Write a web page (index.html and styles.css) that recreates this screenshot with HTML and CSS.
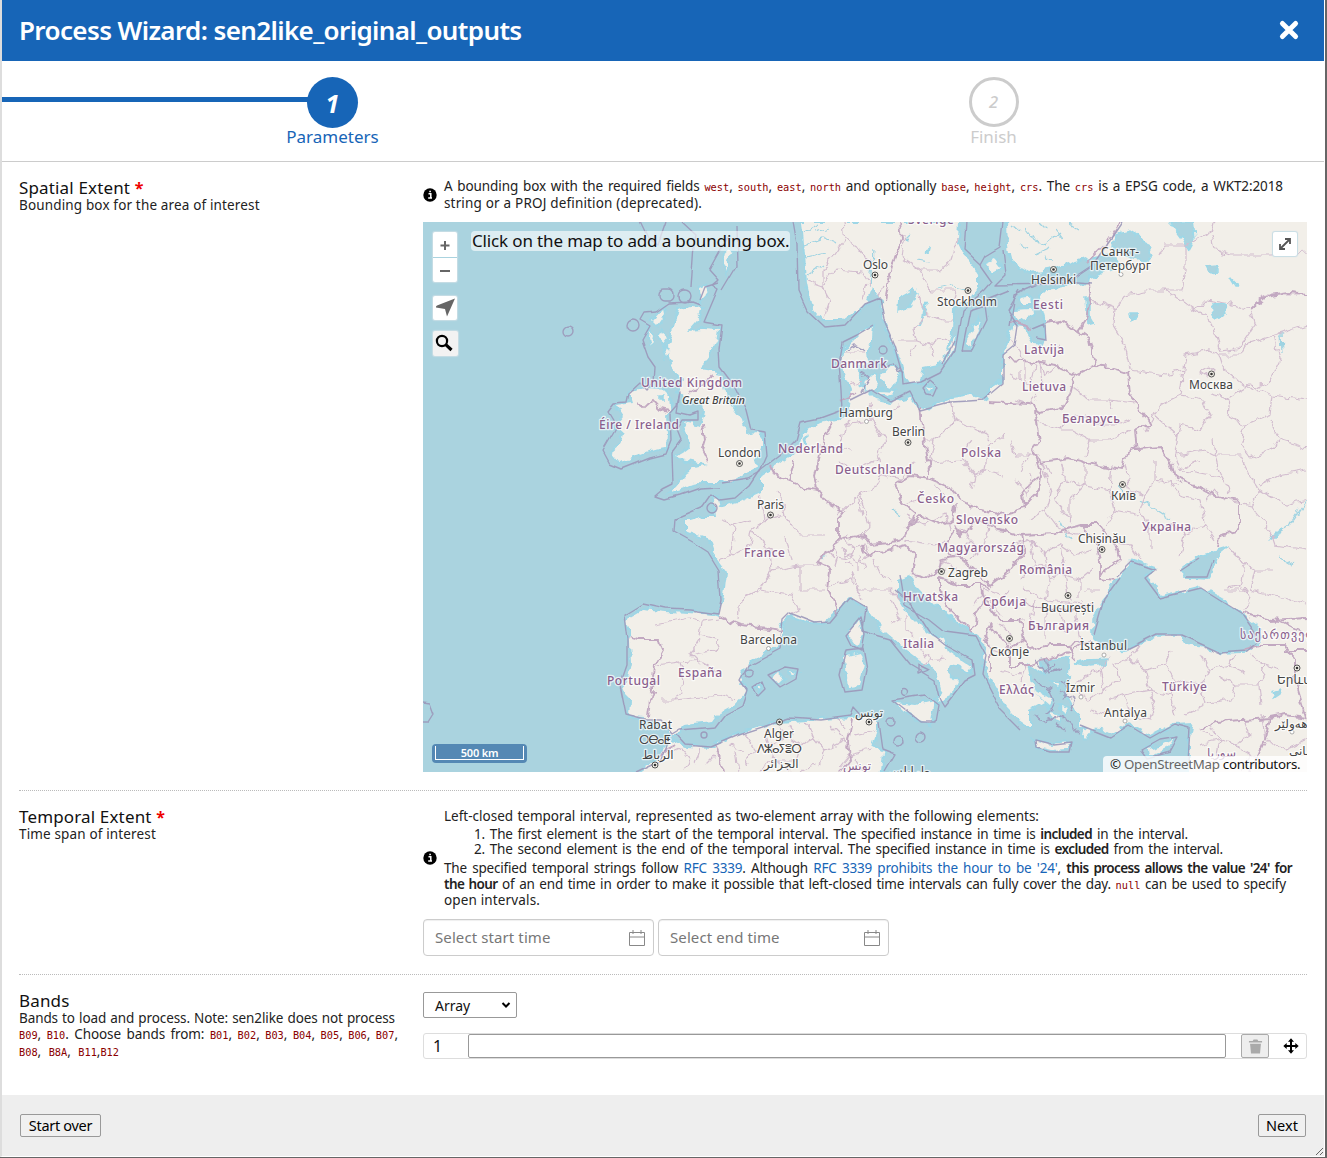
FILE: index.html
```html
<!DOCTYPE html>
<html lang="en">
<head>
<meta charset="utf-8">
<title>Process Wizard</title>
<link rel="stylesheet" href="styles.css">
</head>
<body>
<div class="dialog">
  <header class="bar">
    <h1>Process Wizard: sen2like_original_outputs</h1>
    <svg class="close" viewBox="0 0 20 20"><path d="M4 4L16 16M16 4L4 16"/></svg>
  </header>
  <nav class="steps">
    <div class="step active"><i>1</i><span>Parameters</span></div>
    <div class="step"><i>2</i><span>Finish</span></div>
  </nav>
  <main>
    <section class="row extent">
      <div class="label"><h2>Spatial Extent <b>*</b></h2><p class="l1">Bounding box for the area of interest</p></div>
      <div class="field">
        <div class="help">
          <svg class="info" viewBox="0 0 14 14"><circle cx="7" cy="7" r="6.7"/><path d="M5.5 5.7h2.3v4M5.2 10h3.8M6.3 3.4h1.6"/></svg>
          <div class="text">
            <p class="s1">A bounding box with the required fields <code>west</code>, <code>south</code>, <code>east</code>, <code>north</code> and optionally <code>base</code>, <code>height</code>, <code>crs</code>. The <code>crs</code> is a EPSG code, a WKT2:2018</p>
            <p class="s2">string or a PROJ definition (deprecated).</p>
          </div>
        </div>
        <div class="map">
          <svg class="canvas" viewBox="423 222 884 550">
            <defs>
              <filter id="rough" filterUnits="userSpaceOnUse" x="415" y="214" width="900" height="566" color-interpolation-filters="sRGB">
                <feTurbulence type="fractalNoise" baseFrequency="0.11" numOctaves="2" seed="4"/>
                <feDisplacementMap in="SourceGraphic" scale="9" xChannelSelector="R" yChannelSelector="G"/>
              </filter>
              <filter id="soft" filterUnits="userSpaceOnUse" x="415" y="214" width="900" height="566" color-interpolation-filters="sRGB">
                <feTurbulence type="fractalNoise" baseFrequency="0.04" numOctaves="1" seed="9"/>
                <feDisplacementMap in="SourceGraphic" scale="7" xChannelSelector="R" yChannelSelector="G"/>
              </filter>
              <g id="ground">
                <path d="M678 310L690 306L702 307L701 315L688 330L703 329L718 330L716 342L711 352L705 360L700 368L714 370L722 380L726 397L733 407L743 420L747 436L755 433L763 438L763 447L755 460L757 468L740 477L723 482L700 482L690 484L683 488L671 492L686 473L696 468L708 465L695 462L676 458L690 447L686 430L683 423L700 427L704 412L703 402L688 400L678 393L682 380L673 367L668 347L673 330Z"/>
                <path d="M616 405L633 403L630 393L646 387L661 388L670 397L671 407L666 415L667 432L666 447L650 450L636 455L620 463L611 452L620 444L623 433L616 427L624 417Z"/>
                <path d="M663 310L664 315L657 325L653 321ZM649 330l3 5-2 9-2-7ZM661 332l7 6-4 5-6-5ZM664 348l6 3-4 5ZM700 289l5-2 2 7-6 6ZM725 252l5 2-4 16-3-8Z"/>
                <path d="M802 222L805 253L807 283L812 307L823 320L843 320L867 302L873 286L882 300L883 317L893 343L902 363L905 380L920 382L923 367L943 363L952 330L953 307L967 303L978 287L978 277L965 257L957 240L958 222Z"/>
                <path d="M1007 222L1008 245L1010 260L1030 272L1053 268L1087 258L1114 252L1120 267L1105 272L1090 277L1089 284L1070 286L1047 290L1041 296L1042 306L1045 317L1046 337L1043 344L1033 343L1024 327L1014 326L1007 343L1003 357L1003 380L990 388L987 400L973 395L953 398L927 410L917 407L910 398L890 403L877 400L868 391L858 386L861 376L857 367L868 363L867 350L872 338L873 327L863 332L853 342L844 348L843 370L851 390L848 415L837 420L817 425L803 433L800 450L780 463L762 475L762 492L742 501L720 507L718 499L714 500L716 517L703 517L686 522L686 531L710 540L716 557L727 572L725 590L720 617L713 615L690 613L665 612L643 610L626 620L630 640L631 663L626 687L623 692L631 700L630 717L645 718L656 721L668 730L673 735L683 725L713 722L720 712L737 703L747 692L740 683L743 670L753 660L780 643L783 633L780 623L790 615L810 622L823 623L835 612L850 598L867 607L877 623L887 633L907 650L920 660L937 672L942 690L938 703L950 697L957 683L948 672L950 665L960 667L970 673L972 667L947 650L943 640L927 633L907 613L897 597L897 580L910 575L913 583L919 588L933 603L960 622L983 640L985 670L997 690L1007 707L1020 720L1030 727L1030 710L1043 703L1034 692L1030 677L1027 663L1043 672L1040 660L1070 657L1069 677L1067 693L1080 717L1080 727L1103 728L1113 733L1127 723L1150 735L1173 723L1193 722L1190 737L1190 780L1317 780L1317 212L1007 212Z"/>
                <path d="M635 775L656 760L671 740L686 747L713 748L720 743L740 732L780 723L820 720L853 718L865 715L877 720L877 730L871 747L883 753L880 780L635 780Z"/>
                <path d="M897 703L915 705L934 700L930 723L918 719L907 713ZM845 657L860 653L863 663L858 687L848 688ZM859 619L862 633L857 647L850 637L851 630ZM772 677L778 673L784 678L778 684ZM790 671l6 2-4 3ZM756 688l5-1-3 4ZM1035 741L1050 745L1070 743L1069 748L1050 749L1037 746ZM1147 749L1158 746L1174 738L1166 749L1154 755L1148 755ZM977 321L979 330L969 348L966 340ZM956 336L953 347L946 363L949 348ZM864 382L874 376L877 386L871 391L866 389ZM881 376L888 368L900 369L896 383L889 388ZM877 391L895 392L890 397ZM926 385l7 3-3 3ZM1014 310L1031 309L1032 316L1018 321ZM1020 298l9-1 1 7-8 0ZM986 264l9-4 6 8-9 5ZM1033 689l19 11-3 6-14-12ZM1045 690l3 5M1053 683l6 0-2 4ZM1062 707l5 2-4 4ZM1081 733l7-6 7 0-10 11ZM1050 711l7 2 3 8-6-2Z"/>
              </g>
            </defs>
            <rect class="sea" x="423" y="222" width="884" height="550"/>
            <g filter="url(#rough)">
              <use href="#ground" class="shallows"/>
              <use href="#ground" class="land"/>
              <path class="water" d="M1132 560L1157 568L1143 577L1158 586L1160 597L1177 593L1200 587L1223 600L1243 615L1258 627L1262 640L1248 652L1223 653L1197 647L1180 635L1157 635L1127 650L1107 651L1093 637L1093 620L1103 603L1110 587L1117 577ZM1183 567L1200 556L1230 547L1217 557L1214 567L1210 578L1183 577ZM1074 663L1088 659L1107 658L1106 664L1090 666ZM1115 235L1130 231L1144 240L1152 255L1142 262L1125 256L1113 247ZM1170 222L1193 222L1195 237L1188 250L1181 237ZM1085 298L1090 298L1090 316L1094 323L1087 325ZM899 297L913 289L918 293L910 307L898 311ZM927 303L924 315L920 325L922 311ZM1207 267l9-1 2 6-8 1ZM1211 303l14 2 2 10-7 4-7-5ZM1129 313l7 0 1 4-7 2ZM1230 277l9 10-3 0ZM1270 538l12-10-6 10ZM1271 692l10-4-2 6-6 4ZM925 252l5-2-1 4ZM660 397l4 0 0 3-4 0ZM804 438l4-3-2 10Z"/>
              <g class="rivers">
                <path d="M804 245L822 238L835 243M806 258L826 253M808 275L822 265M815 232L830 228M873 250L870 286M1140 500L1160 512L1172 520M1122 484L1121 500M1281 333L1282 352M1270 538L1290 525L1307 500M1030 235L1045 245L1060 232M1035 255L1050 248M893 510L900 516M822 560L826 555M905 240L910 235M918 260L928 262M1060 520L1070 540M1293 565L1278 556M938 288L952 285L968 290M805 232L818 225"/>
                <path d="M1012 225L1020 232M1024 228L1030 236M1040 222L1048 230M1056 230L1062 238M1070 225L1078 230M1020 245L1028 250M1045 255L1052 260"/>
              </g>
              <g class="provinces">
                <path d="M843 222L845 240L834 256L822 270L822 285L808 280M822 285L830 300L824 318M822 285L835 270L862 272L870 285M845 240L860 250L870 262M866 283L862 300M882 285L878 300M905 235L902 258L920 270L930 290L955 290L953 300M920 270L940 270L950 262L957 240M920 295L925 315L945 320L953 320M900 340L915 340L912 330L923 320M915 340L930 345L940 340L953 345M910 358L915 345M930 345L932 358"/>
                <path d="M850 385L862 380M844 352L865 352M870 400L872 420L885 440L878 460L880 475M885 415L900 405M872 420L845 425M878 460L850 470L840 460M880 475L900 480L915 462M880 475L872 490L858 495L862 515M840 440L850 420M820 445L850 450"/>
                <path d="M950 400L955 420L935 440L928 470M955 420L980 430L990 440M970 440L962 460L975 475L985 470L1005 475M975 475L972 490M985 470L988 445L1005 435M1010 440L1015 455L1040 455M935 440L925 440M962 460L930 462"/>
                <path d="M760 495L765 520L752 530L750 545L732 555L720 560M765 520L785 515L800 535L825 535M785 515L782 500L775 490M752 530L770 550L772 570L760 590L740 600L738 620M772 570L800 565L825 565M800 565L800 590L825 590M760 590L790 595L800 610L790 615M720 520L735 525L750 520M735 525L732 555M785 535L790 560M838 515L860 495L870 525L862 540M700 640L690 655L700 665M656 665L680 662L700 660L720 672M680 662L685 685L675 700L660 700M675 700L720 695L735 700M690 655L715 650L720 640M720 640L700 635L702 622L720 620M656 625L690 618L700 620"/>
                <path d="M830 585L852 580L862 600M852 570L858 590L890 590L900 600M872 558L880 575L892 580M890 600L900 620L890 625M905 615L905 630L915 635M915 640L930 660L945 658M930 660L920 670M860 555L865 570M905 540L935 545L945 540M905 515L925 525L945 515L950 530M930 575L945 570M935 485L945 500M905 505L920 498"/>
                <path d="M1010 340L1025 360L1025 385M1025 360L1040 362L1045 375M1045 375L1060 365M1025 385L1050 390M1040 362L1042 385M1070 385L1090 400L1110 400L1112 410M1110 400L1135 403M1035 420L1060 430L1072 430L1090 440L1085 455M1060 430L1065 420L1085 415L1095 425L1120 425L1130 420M1090 440L1110 440L1130 430"/>
                <path d="M1090 300L1115 310L1113 325L1125 345L1130 370M1115 310L1125 295L1150 290L1165 290L1180 300L1195 310M1165 290L1182 290L1185 270L1185 245L1165 245L1160 255M1185 245L1210 233L1213 222M1212 235L1215 250L1230 255L1270 255L1307 252M1195 310L1205 300L1225 303L1250 310L1255 325L1245 340L1235 350L1220 352L1215 330L1205 315ZM1250 310L1265 295L1307 295M1130 370L1165 375L1183 370L1185 355L1210 350L1220 355L1240 355L1245 345L1275 335L1307 325M1275 335L1280 360L1270 380L1250 390L1235 378L1225 370L1220 355M1183 370L1180 395L1160 405L1145 430M1180 395L1200 398L1210 415L1200 430L1180 425L1178 435L1155 415M1210 395L1230 400L1228 415L1245 425L1270 415L1272 395L1250 385L1225 400M1272 395L1307 400M1245 425L1240 445L1250 458L1270 450L1280 440L1270 420M1280 440L1307 448M1178 435L1175 455L1205 450L1215 455L1213 440M1215 455L1240 455L1250 475L1260 490L1250 505M1215 455L1220 475L1230 492M1307 470L1280 475L1260 485M1175 455L1180 470L1220 478M1250 505L1270 530L1275 545L1307 550M1230 500L1250 505M1260 490L1285 505L1307 500M1230 548L1240 560L1255 570L1250 590L1290 600L1307 605M1255 570L1275 570M1200 460L1180 470M1245 565L1240 590L1225 590"/>
                <path d="M1040 460L1050 490L1045 510L1030 520M1060 462L1065 480L1085 485L1085 460M1065 480L1055 500L1070 520L1070 500L1085 485L1110 490L1112 465M1110 490L1115 510L1105 525M1125 465L1130 490L1145 495L1155 480L1155 460M1145 495L1140 510L1150 530L1150 550M1150 530L1175 525L1185 535L1180 555M1185 535L1205 525L1200 500L1180 495L1170 480M1205 525L1215 540M1205 500L1215 490L1225 500M1115 510L1140 515M1110 540L1130 545L1140 560M1155 480L1180 485M1045 510L1060 530L1080 535"/>
                <path d="M1015 545L1030 540L1045 555L1060 545L1075 555L1090 550M1030 540L1035 565L1020 580M1045 555L1050 580L1065 575L1060 545M1065 575L1080 580L1092 570M1035 565L1060 570M1050 580L1045 600M1065 575L1070 600M1080 580L1080 600M1025 590L1045 600L1095 605M1085 590L1100 590M1035 600L1030 625M1060 608L1065 635M1045 610L1045 640M1075 610L1080 640M970 560L985 545L1000 550M985 545L990 520M955 555L970 540M960 530L975 545M940 560L960 570L975 570M990 600L1000 615M975 605L985 590L1000 595M1000 600L1010 590M1010 620L1025 620M1000 625L1010 635L1010 645M990 650L1005 655M1000 670L1020 675M1020 680L1025 665"/>
                <path d="M1075 690L1085 675L1100 670L1105 690L1090 700ZM1105 690L1120 680L1115 665L1130 658L1145 670L1165 665L1170 650M1145 670L1150 690L1125 695M1150 690L1170 695L1175 680L1165 665M1175 680L1200 685L1210 670L1200 655M1210 670L1230 665L1235 655M1200 685L1205 705L1185 715M1205 705L1230 700L1235 685L1220 675M1235 685L1260 685L1265 665L1250 655M1260 685L1262 705M1170 695L1175 715M1125 695L1130 715L1150 720L1155 705L1150 690M1100 670L1110 655M1130 658L1140 645M1265 665L1280 670M1230 665L1245 672M1110 700L1125 695M1105 715L1090 710M1220 740L1235 745L1250 735L1245 722M1200 745L1220 740L1215 760L1200 765M1235 745L1260 760M1210 725L1220 740M1262 715L1265 740L1285 750L1307 740M1200 730L1212 735M1240 770L1250 755"/>
                <path d="M745 735L755 750L770 745L775 760M755 750L745 765M770 745L785 735L800 745L795 760L775 760M785 735L780 728M800 745L815 738L825 750L845 740L830 725M825 750L820 765M845 740L850 755L840 768M850 755L870 750M855 735L875 730M810 725L815 738M765 730L770 745M790 725L795 735M805 722L812 730M840 720L845 730M730 745L745 750M665 755L680 748L690 760L685 772M700 750L695 765M715 755L705 765M735 750L738 772M855 760L862 772M760 770L775 760L790 772M815 765L800 772"/>
                <path d="M832 545L845 540L855 548L850 558L838 556ZM845 540L848 532M855 548L865 545L868 555L858 562L850 558M838 556L835 566M858 562L858 570M842 548L846 556L853 553M828 552L835 560M850 540L858 536L868 540M845 562L852 566"/>
                <path d="M1010 375L1020 380L1020 370M1035 365L1032 380M1015 400L1030 405L1038 395M1060 345L1050 350M1200 372L1210 366L1215 370L1205 376ZM1228 588L1242 585L1250 600L1245 610M1240 592L1248 592M1020 470L1030 455M1015 480L1028 495L1030 475M1050 475L1040 460"/>
              </g>
              <g class="borders">
                <path d="M900 222L902 240L895 255L890 275L885 300M1120 222L1105 245L1088 262M1088 283L1090 300L1086 320L1078 332M1010 320L1030 328M1045 322L1060 320L1078 332L1090 340L1095 365L1110 367L1128 373L1130 395L1145 415L1150 423L1135 430L1137 452M1010 360L1035 362L1055 365L1075 375M1095 365L1075 375L1070 395L1063 408L1040 412L1030 404L987 402M1035 410L1040 440L1032 450L1040 462L1070 458L1095 465L1122 470L1124 457L1137 450L1160 448L1172 465L1175 478L1200 487L1215 495L1240 500L1240 530L1220 535L1218 548M1032 450L1042 475L1040 490L1025 505"/>
                <path d="M838 402L858 393M920 407L922 425L925 445L930 470L928 478L910 475L895 485L900 500L915 512L910 525L905 535M928 478L950 487L960 500L980 510L1000 515L1025 508L1022 490L1040 475M905 535L900 542L870 545L862 535L838 540L838 520L845 512L825 500L818 490M795 462L790 480L775 475L770 465M790 480L805 488L818 490L815 475L820 455L825 435L832 422M838 540L828 550L818 563L830 570L828 590L838 610L835 615M862 545L865 555L880 552L905 545L915 555L912 575M905 530L920 515L940 525L952 520L955 505M955 530L945 545L950 555L965 562L990 585L1010 570L1025 550L1022 535L1000 530L980 520L960 535L955 525M1022 535L1055 533L1080 525L1095 540L1100 560L1100 578L1115 580M1080 525L1100 525L1115 545L1120 560L1100 575"/>
                <path d="M912 575L925 578L940 570L942 560L955 558M940 578L960 585L980 585L985 600L975 615L973 632L950 610L940 590ZM980 585L990 588M985 600L1000 620L1020 620L1025 640L1030 650L1050 645L1070 645L1090 640M1025 600L1040 608L1070 610L1095 605M1025 640L1010 648L990 625L985 635L990 650L990 672M1010 648L1010 665L1030 665L1070 652L1080 645M1070 645L1075 660M630 637L640 640L660 640L663 650L655 665L653 690L650 700L648 717M720 617L740 625L760 627L782 630M852 720L848 740L850 760L840 772M660 755L675 745M1243 613L1270 620L1307 618M1262 645L1285 645L1295 660L1295 680L1307 720M1262 645L1245 650M1197 730L1215 722L1270 718L1285 715L1307 718M1270 718L1265 740L1250 772M1285 650L1307 650M1276 618L1307 635M1250 310L1255 305L1265 297L1290 293L1307 295M715 744L725 772"/>
                <path d="M639 402L645 407L653 400L660 408L668 410M703 425L705 440L702 450L708 462M712 375L702 385L690 392"/>
              </g>
              <g class="coves"><path d="M1035 680L1050 690L1055 705L1045 715M1060 680L1070 690L1062 700M1035 715L1045 722L1060 715L1070 722L1078 735M1055 725L1065 730M845 350L855 345L865 350M860 370L870 378L862 392M880 368L895 365L903 375M1045 660L1050 672L1060 668M1035 660L1045 672L1055 664M1060 690L1075 700L1070 712"/></g>
            </g>
            <g class="maritime" filter="url(#soft)">
              <path d="M641 221L650 240L657 245L665 222M720 250L709 270L718 280L712 285L718 289L704 322L722 325L719 350L720 367L735 387L746 410L751 430L765 432L767 455L760 471L748 478L722 482M720 250L728 235M736 225L737 265L722 290M700 305L692 302L668 303L655 312L644 313L640 320L650 326L642 340L648 357L655 367L654 383L648 390L640 382L628 393L626 402L614 403L608 411L617 426L603 450L610 463L622 468L650 457L666 453L671 440L670 413L677 405L680 393L677 412L690 415L698 412L698 420L683 420L677 430L681 440L672 452L673 485L663 490L656 496L665 499L680 495L700 488L720 487M682 222L696 235L694 245L691 288M700 300L705 287L718 283"/>
              <circle cx="569" cy="331" r="5"/><circle cx="633" cy="326" r="6"/><rect x="659" y="290" width="15" height="11" rx="5"/><circle cx="685" cy="297" r="6"/><circle cx="713" cy="509" r="5"/>
              <path d="M793 222L797 245L798 290L807 310L825 327L845 325L865 304L880 298L884 320L895 345L902 370L903 385L920 382L940 372L955 350L962 310L985 290L992 282L980 265L964 250L966 222M1003 222L1000 247L985 256L980 265M1003 250L1006 275L996 285L1065 284L1092 266L1122 222M1092 283L1050 280L1015 295L1010 325M873 325L857 335L843 342L839 365L841 390L842 410L820 418L800 422L795 440L780 455L760 470L750 485L735 498L720 500L712 494L703 507L675 519L674 532L697 545L708 552L719 570L721 600L718 614L690 610L665 609L642 604L624 615L627 640L627 665L620 685L626 715L645 720L660 720L672 735L680 730L715 727L725 714L742 705L747 690L740 680L748 665L780 648L783 620L790 613L815 623L830 622L850 598L865 607L862 632L890 640L910 665L935 680L940 700L944 707L965 680L975 675L973 660L945 645L930 633L912 605L895 590M900 575L905 605L930 620L945 632L975 636L985 655L982 675L1000 710L1020 730"/>
              <path d="M850 400L870 390L890 402L910 392L919 410L950 402L985 400L1003 385L1003 355L1015 345L1018 325L1008 310L1020 290M922 388l8-9 8 7-4 9-8-1ZM962 350L970 310L985 305L987 320L972 350ZM942 365L955 340M1033 330L1045 325L1046 340L1036 338M985 300L1010 290M635 772L660 760L668 740M676 735L685 745L710 747L738 735L790 718L820 720L850 716L853 708L862 718M878 722L882 750L895 755L885 772M892 700L925 695L938 705L935 722L920 722ZM846 650L862 648L866 670L862 690L845 692L840 675L843 662ZM860 618L846 635L851 645L861 650L864 635ZM753 688L762 682L765 690L758 697ZM768 675L785 667L798 669L796 678L780 687ZM1035 740L1055 745L1072 743L1070 752L1050 752L1036 748ZM1142 750L1160 740L1178 737L1170 752L1148 758ZM918 665l10 5-10 4Z"/>
              <circle cx="749" cy="673" r="4"/><circle cx="906" cy="692" r="3.5"/><circle cx="891" cy="722" r="4"/><circle cx="921" cy="736" r="5"/><circle cx="897" cy="741" r="5"/><circle cx="703" cy="735" r="3"/><circle cx="884" cy="350" r="4"/>
              <path d="M423 702L430 703L434 714L429 722L423 722M1117 577L1132 562L1155 570L1145 578L1160 598L1200 588L1243 615L1260 640L1247 651L1220 653L1180 635L1157 635L1127 650M1094 635L1104 600L1120 578M1180 570L1200 557M1185 577L1208 577L1214 560M1080 725L1110 737L1128 725L1150 738L1175 724L1190 728L1188 760"/>
            </g>
            <g class="rings"><circle cx="875" cy="275" r="3"/><circle cx="968" cy="290.500" r="3"/><circle cx="1053.500" cy="269.500" r="3"/><circle cx="1211.500" cy="374" r="3"/><circle cx="739.500" cy="463.500" r="3"/><circle cx="908" cy="442.500" r="3"/><circle cx="1122.500" cy="484.500" r="3"/><circle cx="770.500" cy="515" r="3"/><circle cx="941.500" cy="571.500" r="3"/><circle cx="1102" cy="549.500" r="3"/><circle cx="1068" cy="595.500" r="3"/><circle cx="1009.500" cy="638.500" r="3"/><circle cx="1297" cy="668" r="3"/><circle cx="655" cy="765" r="3"/><circle cx="779.500" cy="722" r="3"/><circle cx="869" cy="722" r="3"/></g>
            <g class="dots"><circle cx="875" cy="275" r="1.300"/><circle cx="968" cy="290.500" r="1.300"/><circle cx="1053.500" cy="269.500" r="1.300"/><circle cx="1211.500" cy="374" r="1.300"/><circle cx="739.500" cy="463.500" r="1.300"/><circle cx="908" cy="442.500" r="1.300"/><circle cx="1122.500" cy="484.500" r="1.300"/><circle cx="770.500" cy="515" r="1.300"/><circle cx="941.500" cy="571.500" r="1.300"/><circle cx="1102" cy="549.500" r="1.300"/><circle cx="1068" cy="595.500" r="1.300"/><circle cx="1009.500" cy="638.500" r="1.300"/><circle cx="1297" cy="668" r="1.300"/><circle cx="655" cy="765" r="1.300"/><circle cx="779.500" cy="722" r="1.300"/><circle cx="869" cy="722" r="1.300"/></g>
            <g class="towns"><circle cx="866.500" cy="421.500" r="2"/><circle cx="1121" cy="274.500" r="2"/><circle cx="768.500" cy="648.500" r="2"/><circle cx="1104" cy="655" r="2"/><circle cx="1081" cy="697" r="2"/><circle cx="1125" cy="721" r="2"/><circle cx="1292" cy="732" r="2"/></g>
            <g class="country">
              <text x="908" y="224" textLength="46">Sverige</text>
              <text x="641" y="387" textLength="101">United Kingdom</text>
              <text x="599" y="429" textLength="80">Éire / Ireland</text>
              <text x="831" y="368" textLength="56">Danmark</text>
              <text x="778" y="453" textLength="65">Nederland</text>
              <text x="835" y="474" textLength="77">Deutschland</text>
              <text x="961" y="457" textLength="40">Polska</text>
              <text x="917" y="503" textLength="37">Česko</text>
              <text x="956" y="524" textLength="62">Slovensko</text>
              <text x="937" y="552" textLength="87">Magyarország</text>
              <text x="744" y="557" textLength="41">France</text>
              <text x="903" y="601" textLength="55">Hrvatska</text>
              <text x="983" y="606" textLength="43">Србија</text>
              <text x="1019" y="574" textLength="53">România</text>
              <text x="1028" y="630" textLength="61">България</text>
              <text x="903" y="648" textLength="31">Italia</text>
              <text x="678" y="677" textLength="44">España</text>
              <text x="607" y="685" textLength="53">Portugal</text>
              <text x="999" y="694" textLength="35">Ελλάς</text>
              <text x="1162" y="691" textLength="45">Türkiye</text>
              <text x="1142" y="531" textLength="49">Україна</text>
              <text x="1033" y="309" textLength="30">Eesti</text>
              <text x="1024" y="354" textLength="40">Latvija</text>
              <text x="1022" y="391" textLength="44">Lietuva</text>
              <text x="1062" y="423" textLength="58">Беларусь</text>
              <text x="1240" y="639" textLength="89">საქართველო</text>
              <text class="ar" x="843" y="770">تونس</text>
              <text class="ar" x="1207" y="757">سوريا</text>
            </g>
            <g class="city">
              <text x="863" y="269" textLength="25">Oslo</text>
              <text x="937" y="306" textLength="60">Stockholm</text>
              <text x="1031" y="284" textLength="45">Helsinki</text>
              <text x="1101" y="256" textLength="38">Санкт-</text>
              <text x="1090" y="270" textLength="61">Петербург</text>
              <text x="1189" y="389" textLength="44">Москва</text>
              <text x="839" y="417" textLength="54">Hamburg</text>
              <text x="892" y="436" textLength="33">Berlin</text>
              <text x="718" y="457" textLength="43">London</text>
              <text x="757" y="509" textLength="27">Paris</text>
              <text x="1111" y="500" textLength="25">Київ</text>
              <text x="1078" y="543" textLength="48">Chișinău</text>
              <text x="948" y="577" textLength="40">Zagreb</text>
              <text x="1041" y="612" textLength="53">București</text>
              <text x="740" y="644" textLength="57">Barcelona</text>
              <text x="990" y="656" textLength="39">Скопје</text>
              <text x="1080" y="650" textLength="47">İstanbul</text>
              <text x="1066" y="692" textLength="29">İzmir</text>
              <text x="1104" y="717" textLength="43">Antalya</text>
              <text x="639" y="729" textLength="33">Rabat</text>
              <text x="639" y="744" textLength="32">ⵔⴱⴰⵟ</text>
              <text class="ar" x="642" y="759">الرباط</text>
              <text x="764" y="738" textLength="30">Alger</text>
              <text x="757" y="753" textLength="45">ⴷⵣⴰⵢⴻⵔ</text>
              <text class="ar" x="764" y="768">الجزائر</text>
              <text class="ar" x="855" y="717">تونس</text>
              <text class="ar" x="888" y="775">طرابلس</text>
              <text x="1277" y="684">Երևան</text>
              <text class="ar" x="1275" y="728">هەولێر</text>
              <text class="ar" x="1289" y="755">سلێمانی</text>
              <text class="isle" x="682" y="404" textLength="63">Great Britain</text>
            </g>
          </svg>
          <div class="hint">Click on the map to add a bounding box.</div>
          <div class="zoom"><span><svg viewBox="0 0 24 24"><path d="M7.500 13.500h9M12 9v9"/></svg></span><span><svg viewBox="0 0 24 24"><path d="M7 13h10"/></svg></span></div>
          <div class="tool locate"><svg viewBox="0 0 24 24"><path d="M22 2.500L14 20.500L12 13L3 11.500Q2.500 10.500 4 9.500Z"/></svg></div>
          <div class="tool search"><svg viewBox="0 0 24 24"><circle cx="9" cy="10" r="5.100"/><path d="M12.800 13.700L18.500 19"/></svg></div>
          <div class="tool full"><svg viewBox="0 0 24 24"><path d="M8 16L16 8M12 7h5v5M7 12v5h5"/></svg></div>
          <div class="scale"><span>500 km</span></div>
          <div class="credit">© <a>OpenStreetMap</a> contributors.</div>
        </div>
      </div>
    </section>
    <section class="row temporal">
      <div class="label"><h2>Temporal Extent <b>*</b></h2><p class="l2">Time span of interest</p></div>
      <div class="field">
        <div class="help">
          <svg class="info" viewBox="0 0 14 14"><circle cx="7" cy="7" r="6.700"/><path d="M5.500 5.700h2.300v4M5.200 10h3.800M6.300 3.400h1.600"/></svg>
          <div class="text">
            <p class="t1">Left-closed temporal interval, represented as two-element array with the following elements:</p>
            <ol>
              <li class="t2">1. The first element is the start of the temporal interval. The specified instance in time is <strong>included</strong> in the interval.</li>
              <li class="t3">2. The second element is the end of the temporal interval. The specified instance in time is <strong>excluded</strong> from the interval.</li>
            </ol>
            <p class="t4">The specified temporal strings follow <a>RFC 3339</a>. Although <a>RFC 3339 prohibits the hour to be '24'</a>, <strong>this process allows the value '24' for</strong></p>
            <p class="t5"><strong>the hour</strong> of an end time in order to make it possible that left-closed time intervals can fully cover the day. <code>null</code> can be used to specify</p>
            <p class="t6">open intervals.</p>
          </div>
        </div>
        <div class="dates">
          <div class="date"><span>Select start time</span><svg viewBox="0 0 18 18"><path d="M1.500 3.500h15v13h-15zM1.500 8h15M5 1v4M13 1v4"/></svg></div>
          <div class="date"><span>Select end time</span><svg viewBox="0 0 18 18"><path d="M1.500 3.500h15v13h-15zM1.500 8h15M5 1v4M13 1v4"/></svg></div>
        </div>
      </div>
    </section>
    <section class="row bands">
      <div class="label"><h2>Bands</h2>
        <p class="b1">Bands to load and process. Note: sen2like does not process</p>
        <p class="b2"><code>B09</code>, <code>B10</code>. Choose bands from: <code>B01</code>, <code>B02</code>, <code>B03</code>, <code>B04</code>, <code>B05</code>, <code>B06</code>, <code>B07</code>,</p>
        <p class="b3"><code>B08</code>, <code>B8A</code>, <code>B11</code>,<code>B12</code></p>
      </div>
      <div class="field">
        <div class="select"><span>Array</span><svg viewBox="0 0 10 8"><path d="M1.500 2L5 5.500L8.500 2"/></svg></div>
        <div class="item">
          <span class="num">1</span><span class="input"></span>
          <span class="trash"><svg viewBox="0 0 16 18"><path d="M1 3h4l1-1.500h4L11 3h4v1.800H1zM2.200 6h11.600l-1 10.500H3.200z"/></svg></span>
          <svg class="move" viewBox="0 0 16 16"><path class="ln" d="M8 2v12M2 8h12"/><path d="M8 .3l3 3.400H5zM8 15.700l3-3.400H5zM.3 8l3.400-3v6zM15.700 8l-3.400-3v6z"/></svg>
        </div>
      </div>
    </section>
  </main>
  <footer><span class="btn over">Start over</span><span class="btn next">Next</span>
    <svg class="grip" viewBox="0 0 9 9"><path d="M1 8L8 1M5 8L8 5"/></svg>
  </footer>
</div>
</body>
</html>
```
FILE: styles.css
```css
* { box-sizing: border-box; }
body { margin: 0; height: 1158px; overflow: hidden; background: #666; font-family: "Noto Sans", "Open Sans", "DejaVu Sans", sans-serif; color: #111; }
h1, h2, p, ol { margin: 0; padding: 0; font-weight: 400; }
.dialog { width: 1325px; height: 1157px; margin: 0; border: solid #fff; border-width: 0 1px 1px 1px; border-left: 2px solid #ddd; background: #fff; display: flex; flex-direction: column; }
.bar { height: 61px; flex: none; background: #1765b7; display: flex; align-items: center; justify-content: space-between; padding: 0 24px 2px 17px; }
.bar h1 { color: #fff; font-size: 26px; font-weight: 600; letter-spacing: -.620px; white-space: nowrap; }
.close { width: 22px; height: 22px; }
.close path { stroke: #fff; stroke-width: 4.500; stroke-linecap: round; }
.steps { height: 101px; flex: none; border-bottom: 1px solid #ccc; display: grid; grid-template-columns: 1fr 1fr; padding-top: 16px; }
.step { display: flex; flex-direction: column; align-items: center; color: #ccc; font-size: 17px; line-height: 20px; }
.step i { width: 50px; height: 50px; border: 3px solid #ccc; border-radius: 50%; display: flex; align-items: center; justify-content: center; font-size: 16.500px; font-weight: 500; }
.step.active { color: #1765b7; background: linear-gradient(#1765b7, #1765b7) 0 20px / 320px 5px no-repeat; }
.step.active i { width: 51px; height: 51px; margin-bottom: -1px; border: 0; background: #1765b7; color: #fff; font-size: 25px; font-weight: 700; }
main { flex: 1; padding: 0 17px; }
.row { display: grid; grid-template-columns: 404px 884px; border-bottom: 1px dotted #bbb; }
.extent { height: 629px; padding-top: 16px; }
.temporal { height: 184px; padding-top: 16px; }
.bands { border: 0; padding-top: 17px; }
h2 { font-size: 17px; line-height: 18px; white-space: nowrap; letter-spacing: .15px; }
h2 b { color: #e00; font-size: 16px; line-height: 1; }
p, li { font-size: 13.500px; line-height: 16px; height: 16px; white-space: nowrap; text-align-last: justify; list-style: none; color: #222; letter-spacing: -.1px; }
.label p { margin-bottom: .3px; }
.extent .label, .temporal .label { padding-top: 1px; }
code { font-family: "DejaVu Sans Mono", monospace; font-size: 10.300px; letter-spacing: 0; color: #8b0000; }
.help { display: flex; align-items: center; gap: 7px; }
.info { width: 14px; height: 14px; flex: none; }
.info circle { fill: #000; }
.info path { fill: none; stroke: #fff; stroke-width: 1.500; }
.extent .help { height: 34px; margin-bottom: 10px; }
.extent .help p { height: 17px; line-height: 17px; }
.temporal .help { height: 101px; margin-bottom: 11px; }
.temporal ol { padding: 3px 0 2px 30px; }
.temporal li { height: 15.500px; line-height: 15.500px; letter-spacing: -.2px; }
strong { font-weight: 600; letter-spacing: -.6px; }
a { color: #1765b7; }
.l1 { width: 238px; } .l2 { width: 136px; } .s1 { width: 839px; } .s2 { width: 258px; }
.t1 { width: 595px; } .t2 { width: 714px; } .t3 { width: 749px; } .t4 { width: 848px; } .t5 { width: 842px; } .t6 { width: 95px; }
.b1 { width: 376px; } .b2 { width: 379px; } .b3 { width: 100px; }
.l1, .l2, .s2, .t6 { letter-spacing: .15px; }
.t1 { letter-spacing: 0; }
.t4, .t5 { letter-spacing: -.2px; }
.map { position: relative; width: 884px; height: 550px; overflow: hidden; }
.canvas { display: block; width: 884px; height: 550px; }
.sea, .water { fill: #aad3df; }
.shallows { fill: none; stroke: #9cd8e8; stroke-width: 4; opacity: .8; }
.land { fill: #f2efe9; }
.water { stroke: #9cd8e8; stroke-width: 1.500; }
.rivers { fill: none; stroke: #9ed3e2; stroke-width: 1.200; }
.provinces { fill: none; stroke: #d2bdcf; stroke-width: 1.200; }
.borders { fill: none; stroke: #c2a8c1; stroke-width: 1.900; }
.maritime, .coves { fill: none; stroke: #9c98ba; stroke-width: 1.400; stroke-linejoin: round; opacity: .9; }
.country text, .city text { font-size: 12px; paint-order: stroke; stroke: #ffffffb0; stroke-width: 2.500px; stroke-linejoin: round; }
.country { fill: #8a5f8d; font-weight: 500; }
.city { fill: #444; }
.city .isle { font-size: 11px; font-style: italic; font-weight: 500; }
text.ar { font-family: "DejaVu Sans", sans-serif; }
.rings { fill: #f5f2ea; stroke: #555; stroke-width: 1; }
.dots { fill: #333; }
.towns { fill: #fff; stroke: #999; stroke-width: .8; }
.hint { position: absolute; left: 48px; top: 9px; width: 319px; height: 20px; padding-left: 1px; border-radius: 4px; background: #ffffff99; font-size: 17px; line-height: 20px; letter-spacing: -.140px; white-space: nowrap; }
.zoom, .tool { position: absolute; left: 10px; width: 24px; background: #fff; border-radius: 2px; box-shadow: 0 0 1px 1px #c7dde5; }
.zoom { top: 10px; height: 50px; }
.zoom span { display: block; height: 25px; }
.zoom span + span { border-top: 1px solid #aad3df; }
.zoom svg, .tool svg { display: block; width: 24px; height: 24px; fill: none; stroke: #666; stroke-width: 2; }
.tool { height: 24px; }
.locate { top: 74px; }
.locate svg { fill: #666; stroke: none; }
.search { top: 109px; width: 25px; height: 25px; background: #f2f2f2; }
.search svg { stroke: #000; stroke-width: 2.200; }
.search path { stroke-width: 3.200; }
.full { left: 850px; top: 10px; }
.full svg { stroke: #555; stroke-width: 1.800; }
.scale { position: absolute; left: 9px; top: 522px; width: 95px; height: 19px; padding: 2px 3px; border-radius: 4px; background: #5488b4; }
.scale span { display: block; height: 14px; border: 1px solid #fff; border-top: 0; color: #fff; font-size: 11px; line-height: 13px; font-weight: 600; text-align: center; letter-spacing: -.2px; }
.credit { position: absolute; right: 0; bottom: 0; width: 204px; height: 16px; padding-left: 7px; border-radius: 4px 0 0 0; background: #ffffffcc; font-size: 13.300px; line-height: 16px; white-space: nowrap; letter-spacing: -.270px; }
.credit a { color: #666; }
.dates { display: flex; gap: 4px; }
.date { width: 231px; height: 37px; border: 1px solid #ccc; border-radius: 4px; display: flex; align-items: center; justify-content: space-between; padding: 0 7px 0 11px; box-shadow: inset 0 1px 1px #0001; color: #777; font-size: 15px; letter-spacing: .1px; }
.date span { padding-bottom: 2px; }
.date svg { width: 18px; height: 18px; fill: none; stroke: #888; stroke-width: 1; }
.select { width: 94px; height: 26px; border: 1px solid #999; border-radius: 2px; display: flex; align-items: center; justify-content: space-between; padding: 0 5px 0 11px; font-size: 14px; }
.select svg { width: 10px; height: 8px; fill: none; stroke: #000; stroke-width: 2; }
.item { height: 26px; margin-top: 15px; border: 1px solid #ddd; border-radius: 3px; display: flex; align-items: center; padding-right: 7px; }
.num { width: 44px; padding-left: 9px; font-size: 16px; }
.input { width: 758px; height: 24px; border: 1px solid #999; border-radius: 2px; margin-right: 15px; }
.trash { width: 28px; height: 24px; border: 1px solid #aaa; border-radius: 2px; background: #eee; display: flex; align-items: center; justify-content: center; margin-right: 14px; }
.trash svg { width: 15px; height: 17px; fill: #aaa; }
.move { width: 16px; height: 16px; }
.ln { stroke: #000; stroke-width: 2; }
footer { position: relative; height: 61px; flex: none; background: #eee; display: flex; justify-content: space-between; align-items: center; padding: 0 18px; }
.btn { height: 23px; border: 1px solid #999; border-radius: 2px; background: #f0f0f0; color: #000; font-size: 14.500px; line-height: 21px; text-align: center; white-space: nowrap; }
.over { width: 81px; letter-spacing: -.3px; }
.next { width: 48px; }
.grip { position: absolute; right: 0; bottom: 0; width: 9px; height: 9px; fill: none; stroke: #666; }
```
